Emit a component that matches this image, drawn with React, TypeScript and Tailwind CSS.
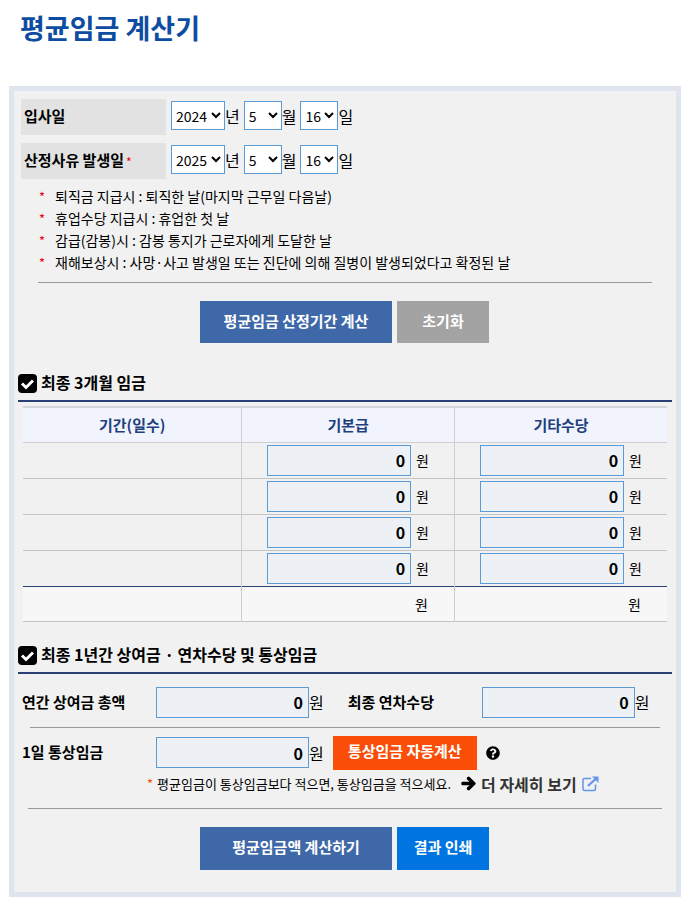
import { FaArrowRight, FaQuestionCircle } from "react-icons/fa";

const NOTES = [
  "퇴직금 지급시 : 퇴직한 날(마지막 근무일 다음날)",
  "휴업수당 지급시 : 휴업한 첫 날",
  "감급(감봉)시 : 감봉 통지가 근로자에게 도달한 날",
  "재해보상시 : 사망·사고 발생일 또는 진단에 의해 질병이 발생되었다고 확정된 날",
];

const MONTHS = Array.from({ length: 12 }, (_, i) => i + 1);
const DAYS = Array.from({ length: 31 }, (_, i) => i + 1);
const YEARS = [2022, 2023, 2024, 2025, 2026];

type DateRowProps = {
  label: string;
  required?: boolean;
  year: number;
  month: number;
  day: number;
};

function DateSelect({ label, value, options, wide }: { label: string; value: number; options: number[]; wide?: boolean }) {
  return (
    <select
      aria-label={label}
      defaultValue={value}
      className={`h-[29px] border border-[#5b9bd5] bg-white text-sm text-black ${wide ? "w-[54px]" : "w-[38px]"}`}
    >
      {options.map((o) => (
        <option key={o} value={o}>
          {o}
        </option>
      ))}
    </select>
  );
}

function DateRow({ label, required, year, month, day }: DateRowProps) {
  return (
    <div className="flex items-start" role="group" aria-label={label}>
      <div className="flex h-9 w-[145px] items-center bg-[#e2e2e2] pb-0.5 pl-[3px] text-[15px] font-bold">
        {label}
        {required && <span className="pt-1 pl-0.5 text-xs font-normal text-red-600">*</span>}
      </div>
      <div className="ml-[5px] flex items-center gap-1 pt-0.5 text-base leading-7">
        <span className="flex items-center">
          <DateSelect label={`${label} 년`} value={year} options={YEARS} wide />년
        </span>
        <span className="flex items-center">
          <DateSelect label={`${label} 월`} value={month} options={MONTHS} />월
        </span>
        <span className="flex items-center">
          <DateSelect label={`${label} 일`} value={day} options={DAYS} />일
        </span>
      </div>
    </div>
  );
}

function MoneyInput({ id, label, className }: { id?: string; label?: string; className: string }) {
  return (
    <input
      id={id}
      aria-label={label}
      type="text"
      inputMode="numeric"
      defaultValue="0"
      className={`h-[31px] border border-[#5b9bd5] bg-[#edf0f5] pr-[5px] text-right text-base font-bold ${className}`}
    />
  );
}

function CheckIcon() {
  return (
    <svg viewBox="0 0 19 19" className="mt-0.5 size-[19px]" aria-hidden="true">
      <rect width="19" height="19" rx="4" fill="#000" />
      <path d="M4 9.500L8 13.500L15 6.500" fill="none" stroke="#fff" strokeWidth="3" />
    </svg>
  );
}

function SectionTitle({ children }: { children: string }) {
  return (
    <h2 className="mx-1 flex h-[30px] items-start gap-1 border-b-2 border-[#2a4075] text-base leading-5 font-bold">
      <CheckIcon />
      {children}
    </h2>
  );
}

function ExternalIcon() {
  return (
    <svg viewBox="0 0 17 16" className="h-4 w-[17px]" aria-hidden="true">
      <path d="M9 2.500H2.500A1.500 1.500 0 0 0 1 4V13A1.500 1.500 0 0 0 2.500 14.500H12A1.500 1.500 0 0 0 13.500 13V8.500" fill="none" stroke="#6495ed" strokeWidth="1.500" />
      <path d="M6 10L13.500 3" fill="none" stroke="#6495ed" strokeWidth="2.200" />
      <path d="M10 0.500H16.500V7Z" fill="#6495ed" />
    </svg>
  );
}

export default function App() {
  return (
    <main className="bg-white pr-2 pb-[5px] pl-[9px] font-['Noto_Sans_CJK_KR',sans-serif] text-black">
      <h1 className="pt-2 pb-[38px] pl-[11px] text-[27px] leading-10 font-bold text-[#0d4da1]">평균임금 계산기</h1>

      <form className="border-[5px] border-[#dfe4ef] bg-[#f1f1f1] pb-[22px]" onSubmit={(e) => e.preventDefault()}>
        <div className="flex flex-col gap-2 pt-2 pl-[7px]">
          <DateRow label="입사일" year={2024} month={5} day={16} />
          <DateRow label="산정사유 발생일" required year={2025} month={5} day={16} />
        </div>

        <ul className="mx-6 mt-[6px] border-b border-[#999] pb-[9px] text-sm leading-[22px]">
          {NOTES.map((note) => (
            <li key={note} className="flex h-[22px]">
              <span className="w-[17px] pl-px text-[13px] leading-6 text-red-600">*</span>
              {note}
            </li>
          ))}
        </ul>

        <div className="mt-[18px] flex justify-center gap-[5px] pr-px text-[15px] font-bold text-white">
          <button type="button" className="h-[42px] w-48 bg-[#3f68a8] pb-0.5">
            평균임금 산정기간 계산
          </button>
          <button type="reset" className="h-[42px] w-[92px] bg-[#a3a3a3] pb-0.5">
            초기화
          </button>
        </div>

        <div className="mt-[29px]">
          <SectionTitle>최종 3개월 임금</SectionTitle>
        </div>
        <div className="mx-[9px] mt-1">
          <table className="w-full table-fixed border-collapse text-sm">
            <colgroup>
              <col className="w-[34%]" />
              <col className="w-[33%]" />
              <col className="w-[33%]" />
            </colgroup>
            <thead>
              <tr className="h-[35px] border-t-2 border-b border-t-[#d5d5de] border-b-[#cdcdd2] bg-[#f1f4fd] text-[15px] text-[#1d3f7d]">
                <th scope="col">기간(일수)</th>
                <th scope="col" className="border-x border-[#cdcdd2]">기본급</th>
                <th scope="col">기타수당</th>
              </tr>
            </thead>
            <tbody>
              {[1, 2, 3, 4].map((n) => (
                <tr key={n} className="h-9 border-b border-[#c4c4c4] last:border-b-[#2a4075]">
                  <td />
                  <td className="border-x border-x-[#cdcdd2]">
                    <div className="flex items-center justify-end gap-[5px] pr-[25px]">
                      <MoneyInput label={`기본급 ${n}`} className="w-36" />원
                    </div>
                  </td>
                  <td>
                    <div className="flex items-center justify-end gap-[5px] pr-[25px]">
                      <MoneyInput label={`기타수당 ${n}`} className="w-36" />원
                    </div>
                  </td>
                </tr>
              ))}
            </tbody>
            <tfoot>
              <tr className="h-[35px] border-b border-[#c4c4c4] bg-[#f7f7f7]">
                <td />
                <td className="border-x border-x-[#cdcdd2] pr-[26px] text-right">원</td>
                <td className="pr-[26px] text-right">원</td>
              </tr>
            </tfoot>
          </table>
        </div>

        <div className="mt-[22px]">
          <SectionTitle>최종 1년간 상여금 · 연차수당 및 통상임금</SectionTitle>
        </div>
        <div className="mx-4 flex items-center border-b border-[#999] pt-[13px] pb-[9px] text-base">
          <label htmlFor="bonus" className="-ml-2 w-[134px] text-[15px] font-bold">
            연간 상여금 총액
          </label>
          <MoneyInput id="bonus" className="w-[153px]" />원
          <label htmlFor="leave" className="ml-6 w-[134px] text-[15px] font-bold">
            최종 연차수당
          </label>
          <MoneyInput id="leave" className="w-[153px]" />원
        </div>

        <div className="mx-[14px] border-b border-[#999] pt-2 pb-[10px]">
          <div className="flex items-center text-base">
            <label htmlFor="daily" className="-ml-[6px] w-[134px] text-[15px] font-bold">
              1일 통상임금
            </label>
            <MoneyInput id="daily" className="w-[153px]" />원
            <button type="button" className="ml-[9px] h-[34px] w-36 bg-[#f94d08] pb-0.5 text-[15px] font-bold text-white">
              통상임금 자동계산
            </button>
            <button type="button" aria-label="도움말" className="ml-[9px]">
              <FaQuestionCircle className="size-[14px]" />
            </button>
          </div>
          <p className="flex h-7 items-center pl-[119px] text-[13px]">
            <span className="pr-1 text-[#f94d08]">*</span>
            평균임금이 통상임금보다 적으면, 통상임금을 적으세요.
            <a href="#detail" className="ml-2.5 flex items-center gap-[5px] text-base font-bold text-[#333]">
              <FaArrowRight className="size-[15px] stroke-black stroke-[40px] text-black" />
              더 자세히 보기
              <ExternalIcon />
            </a>
          </p>
        </div>

        <div className="mt-[18px] flex justify-center gap-[5px] pr-px text-[15px] font-bold text-white">
          <button type="submit" className="h-[43px] w-48 bg-[#3f68a8] pb-0.5">
            평균임금액 계산하기
          </button>
          <button type="button" className="h-[43px] w-[92px] bg-[#0074e1] pb-0.5">
            결과 인쇄
          </button>
        </div>
      </form>
    </main>
  );
}
